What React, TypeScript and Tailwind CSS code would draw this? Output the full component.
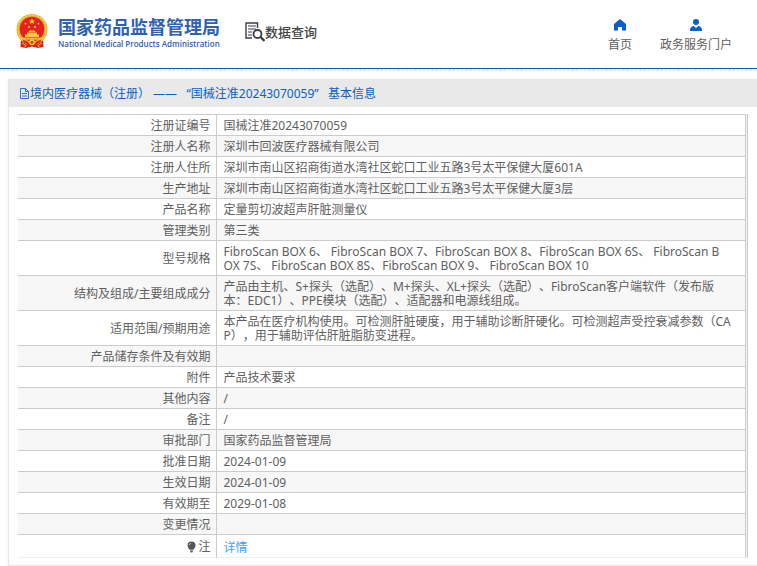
type Row = { label: string; value: string };

const rows: Row[] = [
  { label: "注册证编号", value: "国械注准20243070059" },
  { label: "注册人名称", value: "深圳市回波医疗器械有限公司" },
  { label: "注册人住所", value: "深圳市南山区招商街道水湾社区蛇口工业五路3号太平保健大厦601A" },
  { label: "生产地址", value: "深圳市南山区招商街道水湾社区蛇口工业五路3号太平保健大厦3层" },
  { label: "产品名称", value: "定量剪切波超声肝脏测量仪" },
  { label: "管理类别", value: "第三类" },
  {
    label: "型号规格",
    value:
      "FibroScan BOX 6、 FibroScan BOX 7、FibroScan BOX 8、FibroScan BOX 6S、 FibroScan B\nOX 7S、 FibroScan BOX 8S、FibroScan BOX 9、 FibroScan BOX 10",
  },
  {
    label: "结构及组成/主要组成成分",
    value: "产品由主机、S+探头（选配）、M+探头、XL+探头（选配）、FibroScan客户端软件（发布版\n本：EDC1）、PPE模块（选配）、适配器和电源线组成。",
  },
  {
    label: "适用范围/预期用途",
    value: "本产品在医疗机构使用。可检测肝脏硬度，用于辅助诊断肝硬化。可检测超声受控衰减参数（CAP），用于辅助评估肝脏脂肪变进程。",
  },
  { label: "产品储存条件及有效期", value: "" },
  { label: "附件", value: "产品技术要求" },
  { label: "其他内容", value: "/" },
  { label: "备注", value: "/" },
  { label: "审批部门", value: "国家药品监督管理局" },
  { label: "批准日期", value: "2024-01-09" },
  { label: "生效日期", value: "2024-01-09" },
  { label: "有效期至", value: "2029-01-08" },
  { label: "变更情况", value: "" },
];

function Emblem() {
  return (
    <svg viewBox="0 0 32 34" className="h-[34px] w-8 shrink-0" aria-hidden="true">
      <path d="M5 24 L4.5 33 L10 34 L16 32.5 L22 34 L27.5 33 L27 24Z" fill="#d9201f" />
      <circle cx="16" cy="15.5" r="15.5" fill="#e9ad2c" />
      <circle cx="16" cy="15.5" r="14.2" fill="none" stroke="#f7d560" strokeWidth="1.2" strokeDasharray="2 1" />
      <circle cx="16" cy="15" r="12.3" fill="#e2231f" />
      <path d="M16 4.2l.8 2.2h2.4l-1.9 1.4.7 2.3-2-1.4-2 1.4.7-2.3-1.9-1.4h2.4z" fill="#f9d648" />
      <g fill="#f9d648">
        <circle cx="9.5" cy="9.7" r=".9" />
        <circle cx="22.5" cy="9.7" r=".9" />
        <circle cx="13" cy="13" r=".9" />
        <circle cx="19" cy="13" r=".9" />
      </g>
      <path d="M12.5 18l1-1.5h5l1 1.5zM11 18.4h10v2.2h2v2.4H9v-2.4h2z" fill="#f5c93c" />
      <path d="M5.5 23.5h21l-2 2.2h-17z" fill="#f2bd35" />
      <path d="M7 26c3 0 5 3.5 9 3.5s6-3.5 9-3.5l-.5 2.5c-2.5.3-4.5 3-8.5 3s-6-2.7-8.5-3z" fill="#d9201f" />
      <circle cx="16" cy="28.2" r="3" fill="#f2c13a" />
      <circle cx="16" cy="28.2" r="1.3" fill="#d9201f" />
      <path d="M6 29l4 2.5-1.5 2M26 29l-4 2.5 1.5 2" fill="none" stroke="#f2c13a" strokeWidth="1" />
    </svg>
  );
}

function SearchDocIcon() {
  return (
    <svg viewBox="0 0 20 20" className="size-5 shrink-0" fill="none" stroke="#3b3c4a" aria-hidden="true">
      <path d="M7 16H1V1h11.5v5" strokeWidth="1.4" />
      <path d="M3 4h8M3 7h8M3 10h4M3 13h4" strokeWidth="1.2" />
      <circle cx="12.5" cy="12" r="4" strokeWidth="1.8" />
      <path d="M15.5 15l4 4" strokeWidth="2.4" />
    </svg>
  );
}

function HomeIcon() {
  return (
    <svg viewBox="0 0 12 12" className="size-3" fill="#0a5fc8" aria-hidden="true">
      <path d="M6 0 0 5v6.5h4V8h4v3.5h4V5z" />
    </svg>
  );
}

function UserIcon() {
  return (
    <svg viewBox="0 0 12 12" className="size-3" fill="#0a5fc8" aria-hidden="true">
      <circle cx="6" cy="3" r="3" />
      <path d="M0 12c0-3 1-4.6 3.7-5L6 9l2.3-2c2.7.4 3.7 2 3.7 5z" />
    </svg>
  );
}

function FileIcon() {
  return (
    <svg viewBox="0 0 11 12" className="h-3 w-[11px] shrink-0" fill="none" stroke="#2a72cc" aria-hidden="true">
      <path d="M1.5.5h5l3 3v7h-8zM6.5.5v3h3M3 5.5h5M3 8h5" />
    </svg>
  );
}

function BulbIcon() {
  return (
    <svg viewBox="0 0 9 12" className="h-3 w-[9px]" aria-hidden="true">
      <path d="M4.5.5a4 4 0 0 1 4 4c0 2-1.3 2.8-2 4.2h-4C1.8 7.3.5 6.5.5 4.5a4 4 0 0 1 4-4z" fill="#55555c" />
      <path d="M3 9.5h3v1H5.5v1h-2v-1H3z" fill="#55555c" />
      <path d="M2 4.3a2.5 2.5 0 0 1 2-2" fill="none" stroke="#ddd" strokeWidth=".7" />
    </svg>
  );
}

export default function App() {
  return (
    <div className="bg-white font-['Noto_Sans','Noto_Sans_CJK_SC',sans-serif] text-xs text-[#606060] [text-spacing-trim:space-all]">
      <header className="flex h-[69px] items-center border-b border-[#0a5fc4] pr-[25px] pb-[6px] pl-4">
        <a href="#" className="flex items-center gap-[10px] text-[#3060b0]">
          <Emblem />
          <span className="flex flex-col pt-[3px]">
            <span className="text-[18px] leading-[22px] font-bold">国家药品监督管理局</span>
            <span className="font-['Open_Sans',sans-serif] text-[8px] leading-3 font-semibold whitespace-nowrap">
              National Medical Products Administration
            </span>
          </span>
        </a>
        <h1 className="ml-[25px] flex items-center pt-[2px] text-[13px] leading-5 font-medium text-[#444]">
          <SearchDocIcon />
          数据查询
        </h1>
        <nav className="ml-auto flex gap-7 pt-[10px]">
          <a href="#" className="flex flex-col items-center gap-[6px]">
            <HomeIcon />
            <span className="leading-4">首页</span>
          </a>
          <a href="#" className="flex flex-col items-center gap-[6px]">
            <UserIcon />
            <span className="leading-4">政务服务门户</span>
          </a>
        </nav>
      </header>
      <div className="h-[2px] bg-[repeating-linear-gradient(135deg,#e4e4e4_0_1px,#fff_1px_3px)]" />

      <main className="mt-2 ml-2 border-b border-l border-[#e6e6e6] shadow-[0_0_4px_#eee]">
        <h2 className="flex h-7 items-center bg-[#e9e9e9] pt-px pl-[10px] text-[#0a5fc4]">
          <FileIcon />
          境内医疗器械（注册） ——&nbsp;&nbsp; “国械注准20243070059”&nbsp;&nbsp; 基本信息
        </h2>
        <div className="px-[9px] py-[7px]">
          <div className="border-r border-[#ccc] bg-[#f0f0f6] pr-px">
            <table className="w-full table-fixed border-collapse border-t border-r border-[#ccc] bg-white leading-[14px]">
              <tbody>
                {rows.map((row) => (
                  <tr key={row.label} className="border-b border-[#ccc] even:bg-[#f7f7f7]">
                    <th scope="row" className="h-[21px] w-[198px] border-r border-[#ccc] pt-1 pr-[5px] pb-[2px] text-right font-normal">
                      {row.label}
                    </th>
                    <td className="pt-1 pr-[6px] pb-[2px] pl-[7px] break-all whitespace-pre-line">{row.value}</td>
                  </tr>
                ))}
                <tr className="border-b border-[#eee]">
                  <th scope="row" className="h-[23px] border-r border-[#ccc] pt-1 pr-[5px] pb-[2px] font-normal">
                    <span className="flex items-center justify-end gap-[2px]">
                      <BulbIcon />注
                    </span>
                  </th>
                  <td className="pt-[6px] pr-[6px] pb-[2px] pl-[7px]">
                    <a href="#" className="text-[#409eff]">详情</a>
                  </td>
                </tr>
              </tbody>
            </table>
          </div>
        </div>
      </main>
    </div>
  );
}
